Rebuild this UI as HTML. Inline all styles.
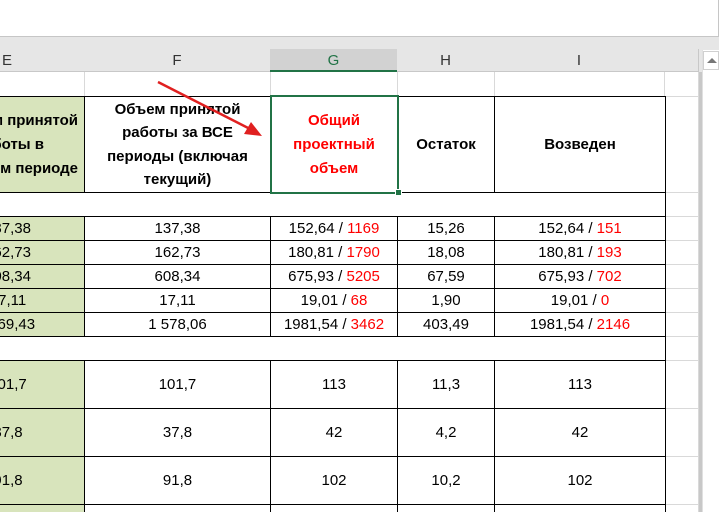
<!DOCTYPE html>
<html><head><meta charset="utf-8"><style>
*{margin:0;padding:0;box-sizing:border-box}
html,body{width:719px;height:512px;overflow:hidden}
body{background:#fff;position:relative;font-family:"Liberation Sans","DejaVu Sans",sans-serif;font-size:15px;color:#000}
#w{position:absolute;left:0;top:0;width:719px;height:512px;overflow:hidden}
.a{position:absolute}
.top{left:0;top:0;width:719px;height:37px;background:#fff;border-bottom:1px solid #c6c6c6;border-right:1px solid #c6c6c6}
.bar{left:0;top:37px;width:719px;height:35px;background:#e6e6e6}
.ch{top:49px;height:23px;border-right:1px solid #c8c8c8;border-bottom:1px solid #c8c8c8;text-align:center;line-height:23px;font-size:15px;color:#333;background:#e6e6e6}
.gl{background:#d9d9d9}
table{position:absolute;left:-69px;top:96px;width:734px;border-collapse:collapse;table-layout:fixed}
td{border:1px solid #000;text-align:center;vertical-align:middle;padding:0;background:#fff;overflow:hidden;white-space:nowrap}
td.g{background:#d8e4bc}
.r{color:#f00}
.b{font-weight:bold}
tr.s td{height:24px}
tr.t td{height:48px}
</style></head><body><div id="w">
<div class="a top"></div>
<div class="a bar"></div>
<div class="a ch" style="left:-10px;width:95px;text-align:left;padding-left:12px">E</div>
<div class="a ch" style="left:84px;width:187px">F</div>
<div class="a ch" style="left:270px;width:128px;background:#d2d2d2;color:#217346;border-bottom:2px solid #217346">G</div>
<div class="a ch" style="left:397px;width:98px">H</div>
<div class="a ch" style="left:494px;width:171px">I</div>
<div class="a ch" style="left:664px;width:35px"></div>
<div class="a gl" style="left:84px;top:72px;width:1px;height:24px"></div>
<div class="a gl" style="left:270px;top:72px;width:1px;height:24px"></div>
<div class="a gl" style="left:397px;top:72px;width:1px;height:24px"></div>
<div class="a gl" style="left:494px;top:72px;width:1px;height:24px"></div>
<div class="a gl" style="left:664px;top:72px;width:1px;height:24px"></div>
<div class="a gl" style="left:698px;top:72px;width:1px;height:440px"></div>
<div class="a gl" style="left:664px;top:96px;width:35px;height:1px"></div>
<div class="a gl" style="left:664px;top:192px;width:35px;height:1px"></div>
<div class="a gl" style="left:664px;top:216px;width:35px;height:1px"></div>
<div class="a gl" style="left:664px;top:240px;width:35px;height:1px"></div>
<div class="a gl" style="left:664px;top:264px;width:35px;height:1px"></div>
<div class="a gl" style="left:664px;top:288px;width:35px;height:1px"></div>
<div class="a gl" style="left:664px;top:312px;width:35px;height:1px"></div>
<div class="a gl" style="left:664px;top:336px;width:35px;height:1px"></div>
<div class="a gl" style="left:664px;top:360px;width:35px;height:1px"></div>
<div class="a gl" style="left:664px;top:408px;width:35px;height:1px"></div>
<div class="a gl" style="left:664px;top:456px;width:35px;height:1px"></div>
<div class="a gl" style="left:664px;top:504px;width:35px;height:1px"></div>

<table>
<colgroup><col style="width:153px"><col style="width:186px"><col style="width:127px"><col style="width:97px"><col style="width:171px"></colgroup>
<tr><td class="g b" style="height:96px;text-align:right;padding-right:6px;line-height:24px">Объем принятой<br><span style="padding-right:34px">работы в</span><br>текущем периоде</td>
<td class="b" style="line-height:23.5px">Объем принятой<br>работы за ВСЕ<br>периоды (включая<br>текущий)</td>
<td class="b r" style="line-height:24px">Общий<br>проектный<br>объем</td>
<td class="b">Остаток</td>
<td class="b">Возведен</td></tr>
<tr class="s"><td colspan="5"></td></tr>
<tr class="s"><td class="g">137,38</td><td>137,38</td><td>152,64 / <span class="r">1169</span></td><td>15,26</td><td>152,64 / <span class="r">151</span></td></tr>
<tr class="s"><td class="g">162,73</td><td>162,73</td><td>180,81 / <span class="r">1790</span></td><td>18,08</td><td>180,81 / <span class="r">193</span></td></tr>
<tr class="s"><td class="g">608,34</td><td>608,34</td><td>675,93 / <span class="r">5205</span></td><td>67,59</td><td>675,93 / <span class="r">702</span></td></tr>
<tr class="s"><td class="g">17,11</td><td>17,11</td><td>19,01 / <span class="r">68</span></td><td>1,90</td><td>19,01 / <span class="r">0</span></td></tr>
<tr class="s"><td class="g">1569,43</td><td>1 578,06</td><td>1981,54 / <span class="r">3462</span></td><td>403,49</td><td>1981,54 / <span class="r">2146</span></td></tr>
<tr class="s"><td colspan="5"></td></tr>
<tr class="t"><td class="g">101,7</td><td>101,7</td><td>113</td><td>11,3</td><td>113</td></tr>
<tr class="t"><td class="g">37,8</td><td>37,8</td><td>42</td><td>4,2</td><td>42</td></tr>
<tr class="t"><td class="g">91,8</td><td>91,8</td><td>102</td><td>10,2</td><td>102</td></tr>
<tr class="s"><td class="g"></td><td></td><td></td><td></td><td></td></tr>
</table>
<div class="a" style="left:699px;top:72px;width:3px;height:440px;background:#c8c8c8"></div>
<div class="a" style="left:702px;top:50px;width:17px;height:462px;background:#fff;border-left:1px solid #e0e0e0"></div>
<div class="a" style="left:703px;top:51px;width:16px;height:19px;border:1px solid #d0d0d0;background:#fff"></div>
<div class="a" style="left:707px;top:58px;width:0;height:0;border-left:5px solid transparent;border-right:5px solid transparent;border-bottom:5px solid #777"></div>
<div class="a" style="left:270px;top:95px;width:129px;height:99px;border:2px solid #217346"></div>
<div class="a" style="left:395px;top:189px;width:7px;height:7px;background:#217346;border:1px solid #fff"></div>
<svg class="a" style="left:0;top:0" width="719" height="512">
<line x1="158" y1="82" x2="254" y2="131" stroke="#e02020" stroke-width="2.5"/>
<polygon points="262,136 244,134 251,122" fill="#e02020"/>
</svg>
</div></body></html>
